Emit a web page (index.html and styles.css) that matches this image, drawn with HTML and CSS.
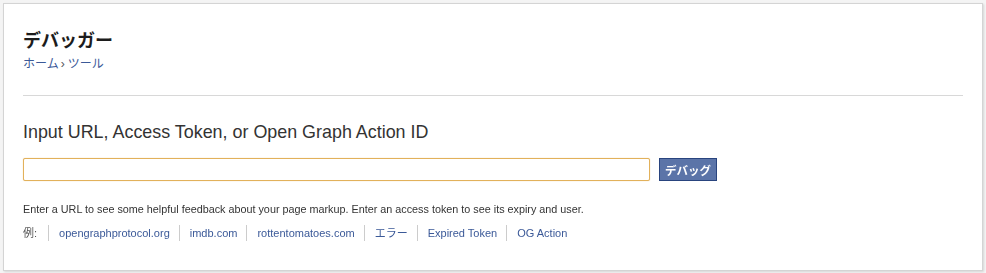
FILE: index.html
```html
<!DOCTYPE html>
<html lang="ja">
<head>
  <meta charset="UTF-8">
  <title>デバッガー</title>
  <link rel="stylesheet" href="styles.css">
</head>
<body>
  <div class="panel">
    <!-- Page header -->
    <div class="page-head">
      <h1>デバッガー</h1>
      <div class="crumbs"><a href="#">ホーム</a><span class="sep">›</span><a href="#">ツール</a></div>
    </div>

    <!-- Debug form -->
    <form class="debug-form">
      <h2>Input URL, Access Token, or Open Graph Action ID</h2>
      <div class="input-row">
        <input type="text" class="url-input" autofocus>
        <button type="submit" class="debug-btn">デバッグ</button>
      </div>
      <p class="hint">Enter a URL to see some helpful feedback about your page markup. Enter an access token to see its expiry and user.</p>
      <ul class="examples">
        <li class="label">例:</li>
        <li><a href="#">opengraphprotocol.org</a></li>
        <li><a href="#">imdb.com</a></li>
        <li><a href="#">rottentomatoes.com</a></li>
        <li><a href="#">エラー</a></li>
        <li><a href="#">Expired Token</a></li>
        <li><a href="#">OG Action</a></li>
      </ul>
    </form>
  </div>
</body>
</html>
```

FILE: styles.css
```css
/* General reset */
* {
  margin: 0;
  padding: 0;
  box-sizing: border-box;
}

body {
  font-family: 'Liberation Sans', 'Noto Sans CJK JP', sans-serif;
  background-color: #f4f4f4;
  color: #333;
  padding: 3px;
}

a {
  color: #3b5998;
  text-decoration: none;
}

/* Main panel */
.panel {
  width: 980px;
  height: 268px;
  background: #fff;
  border: 1px solid #d4d4d4;
  box-shadow: 1px 1px 2px rgba(0, 0, 0, 0.12);
  padding: 0 19px;
}

/* Header */
.page-head {
  padding-top: 24px;
  padding-bottom: 23px;
  border-bottom: 1px solid #d8d8d8;
}

.page-head h1 {
  font-family: 'Noto Sans CJK JP', sans-serif;
  font-size: 18px;
  font-weight: bold;
  line-height: 22px;
  color: #1c1c1c;
}

.crumbs {
  font-family: 'Noto Sans CJK JP', sans-serif;
  font-size: 12px;
  line-height: 16px;
  margin-top: 5px;
}

.crumbs .sep {
  font-family: 'Liberation Sans', sans-serif;
  color: #555;
  font-size: 12px;
  padding: 0 3px 0 2px;
}

/* Form */
.debug-form {
  padding-top: 25px;
}

.debug-form h2 {
  font-size: 17.9px;
  font-weight: normal;
  line-height: 22px;
  color: #333;
}

.input-row {
  display: flex;
  align-items: center;
  gap: 9px;
  margin-top: 15px;
}

.url-input {
  width: 627px;
  height: 23px;
  border: 1px solid #e2b15b;
  border-radius: 2px;
  box-shadow: 0 0 1px #e8c27d;
  padding: 2px 4px;
  outline: none;
  font-size: 12px;
}

.debug-btn {
  font-family: 'Noto Sans CJK JP', sans-serif;
  height: 23px;
  padding: 0 5px;
  background-color: #5b74a8;
  border: 1px solid #29447e;
  color: #fff;
  font-size: 11.5px;
  font-weight: bold;
  cursor: pointer;
}

.hint {
  font-size: 10.8px;
  line-height: 14px;
  margin-top: 21px;
  color: #333;
}

.examples {
  list-style: none;
  display: flex;
  font-size: 11px;
  line-height: 16px;
  margin-top: 9px;
}

.examples li {
  padding: 0 9px 0 10px;
  border-left: 1px solid #ccc;
}

.examples li.label {
  padding: 0 11px 0 0;
  border-left: none;
  color: #555;
}
```
